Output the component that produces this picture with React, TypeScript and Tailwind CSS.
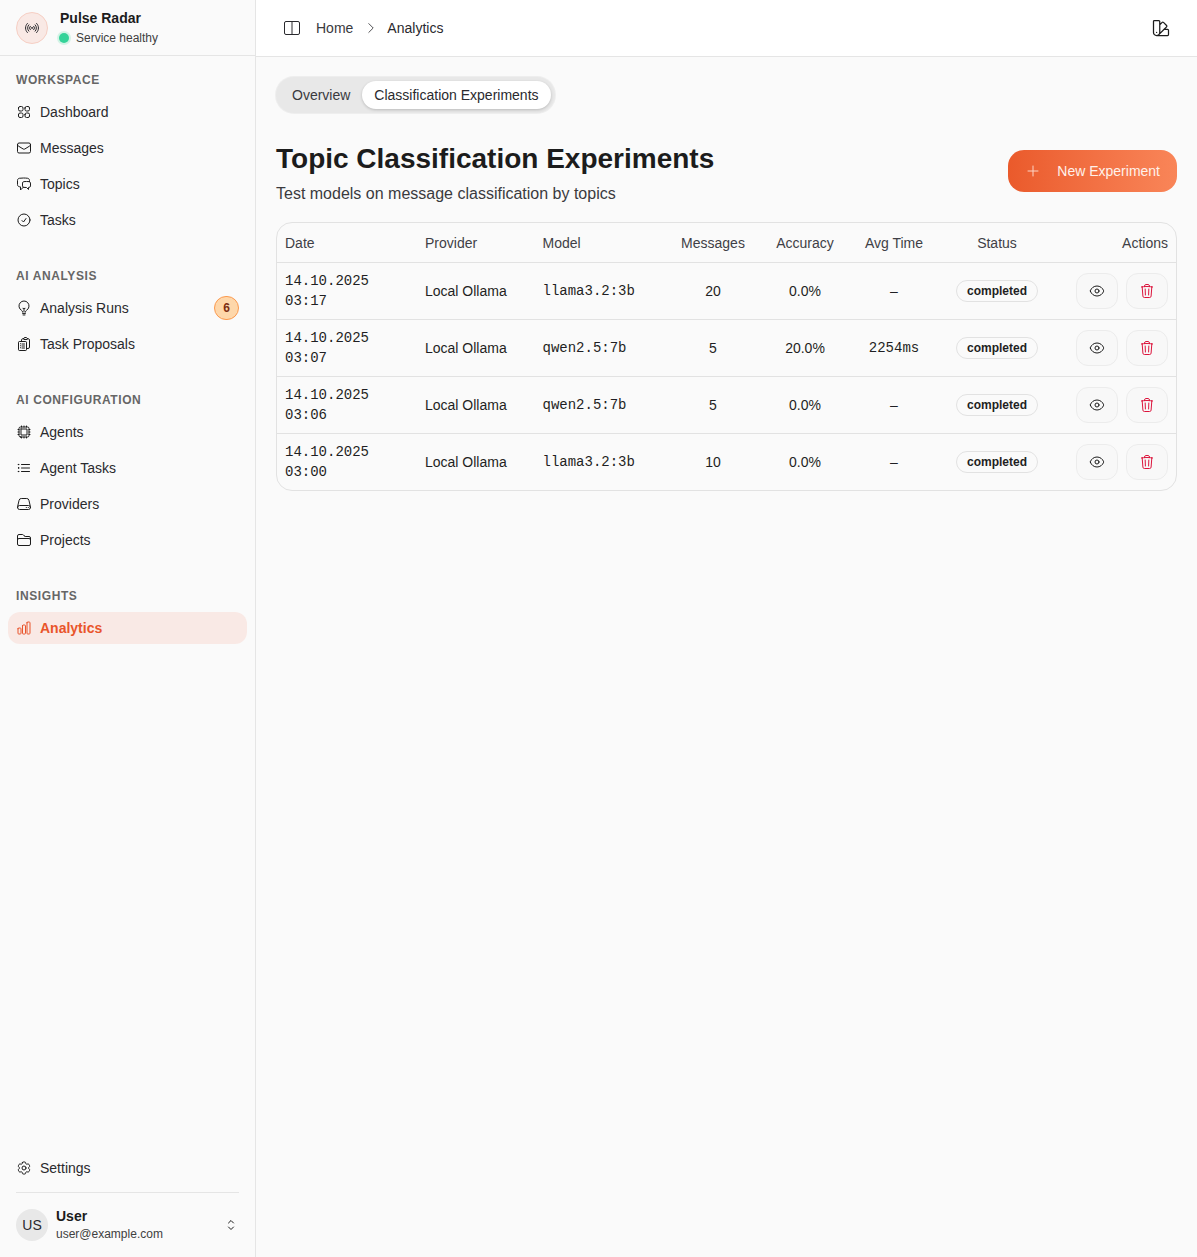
import React from 'react';
import {
  HiOutlineChartBar,
  HiOutlineChatBubbleLeftRight,
  HiOutlineCheckCircle,
  HiOutlineChevronRight,
  HiOutlineChevronUpDown,
  HiOutlineClipboardDocumentList,
  HiOutlineCog6Tooth,
  HiOutlineCpuChip,
  HiOutlineEnvelope,
  HiOutlineEye,
  HiOutlineFolder,
  HiOutlineLightBulb,
  HiOutlineListBullet,
  HiOutlinePlus,
  HiOutlineServer,
  HiOutlineSignal,
  HiOutlineSquares2X2,
  HiOutlineSwatch,
  HiOutlineTrash,
} from 'react-icons/hi2';

type IconType = React.ComponentType<{ className?: string }>;

interface NavItem {
  label: string;
  icon: IconType;
  badge?: string;
  active?: boolean;
}

const navGroups: { title: string; items: NavItem[] }[] = [
  {
    title: 'Workspace',
    items: [
      { label: 'Dashboard', icon: HiOutlineSquares2X2 },
      { label: 'Messages', icon: HiOutlineEnvelope },
      { label: 'Topics', icon: HiOutlineChatBubbleLeftRight },
      { label: 'Tasks', icon: HiOutlineCheckCircle },
    ],
  },
  {
    title: 'AI Analysis',
    items: [
      { label: 'Analysis Runs', icon: HiOutlineLightBulb, badge: '6' },
      { label: 'Task Proposals', icon: HiOutlineClipboardDocumentList },
    ],
  },
  {
    title: 'AI Configuration',
    items: [
      { label: 'Agents', icon: HiOutlineCpuChip },
      { label: 'Agent Tasks', icon: HiOutlineListBullet },
      { label: 'Providers', icon: HiOutlineServer },
      { label: 'Projects', icon: HiOutlineFolder },
    ],
  },
  {
    title: 'Insights',
    items: [{ label: 'Analytics', icon: HiOutlineChartBar, active: true }],
  },
];

const experiments = [
  { date: '14.10.2025', time: '03:17', provider: 'Local Ollama', model: 'llama3.2:3b', messages: 20, accuracy: '0.0%', avg: '–' },
  { date: '14.10.2025', time: '03:07', provider: 'Local Ollama', model: 'qwen2.5:7b', messages: 5, accuracy: '20.0%', avg: '2254ms' },
  { date: '14.10.2025', time: '03:06', provider: 'Local Ollama', model: 'qwen2.5:7b', messages: 5, accuracy: '0.0%', avg: '–' },
  { date: '14.10.2025', time: '03:00', provider: 'Local Ollama', model: 'llama3.2:3b', messages: 10, accuracy: '0.0%', avg: '–' },
];

const NavRow: React.FC<{ item: NavItem }> = ({ item }) => {
  const Icon = item.icon;
  return (
    <div className={`flex h-8 items-center gap-2 rounded-xl px-2 text-sm ${item.active ? 'bg-[#f9e9e5] font-semibold text-[#e9552b]' : 'text-[#2a2a2e]'}`}>
      <Icon className={`h-4 w-4 shrink-0 ${item.active ? '' : 'text-[#1c1c1c]'}`} />
      <span className="flex-1">{item.label}</span>
      {item.badge && (
        <span className="flex h-6 w-[25px] items-center justify-center rounded-full border border-[#fb9a4f] bg-[#fed7aa] text-xs font-bold text-[#7c2d12]">
          {item.badge}
        </span>
      )}
    </div>
  );
};

const Sidebar = () => (
  <aside className="flex min-h-screen w-[256px] shrink-0 flex-col border-r border-[#e5e5e5] bg-[#fafafa]">
    <div className="flex h-[56px] items-center gap-3 border-b border-[#e5e5e5] px-4">
      <div className="flex h-8 w-8 items-center justify-center rounded-full border border-[#f6cfc4] bg-[#f9e9e5] text-[#2a2a2e]">
        <HiOutlineSignal className="h-4 w-4" />
      </div>
      <div className="mb-[2px] min-w-0">
        <div className="text-sm leading-5 font-semibold text-[#1c1c1c]">Pulse Radar</div>
        <div className="mt-0.5 -ml-px flex items-center gap-[7px] text-xs leading-4 text-[#404040]">
          <span className="h-2.5 w-2.5 rounded-full bg-[#34d399] ring-2 ring-[#d3f3e6]" />
          Service healthy
        </div>
      </div>
    </div>
    <nav className="flex flex-1 flex-col gap-2">
      {navGroups.map(group => (
        <div key={group.title} className="p-2">
          <div className="flex h-8 items-center px-2 text-xs font-semibold tracking-wider text-[#666666] uppercase">
            {group.title}
          </div>
          <div className="flex flex-col gap-1">
            {group.items.map(item => (
              <NavRow key={item.label} item={item} />
            ))}
          </div>
        </div>
      ))}
    </nav>
    <div className="px-2 pt-2 pb-[13px]">
      <NavRow item={{ label: 'Settings', icon: HiOutlineCog6Tooth }} />
      <div className="mx-2 mt-2 border-t border-[#e5e5e5]" />
      <div className="flex items-center gap-2 px-2 pt-[13px]">
        <div className="flex h-8 w-8 items-center justify-center rounded-full bg-[#e8e8e8] text-sm text-[#2a2a2e]">US</div>
        <div className="mb-[2px] min-w-0 flex-1">
          <div className="text-sm leading-5 font-semibold text-[#1c1c1c]">User</div>
          <div className="text-xs leading-4 text-[#404040]">user@example.com</div>
        </div>
        <HiOutlineChevronUpDown className="h-4 w-4 text-[#1c1c1c]" />
      </div>
    </div>
  </aside>
);

const Topbar = () => (
  <header className="flex h-[57px] items-center justify-between border-b border-[#e5e5e5] bg-white px-[28px] text-sm">
    <div className="flex items-center">
      <svg width="16" height="14" viewBox="0 0 16 14" fill="none" stroke="#2a2a2e">
        <rect x="0.5" y="0.5" width="15" height="13" rx="1.5" />
        <line x1="8" y1="0.5" x2="8" y2="13.5" />
      </svg>
      <span className="ml-4 text-[#3a3a3e]">Home</span>
      <HiOutlineChevronRight className="mr-[9px] ml-[11px] h-3.5 w-3.5 text-[#3a3a3e]" />
      <span className="text-[#2a2a2e]">Analytics</span>
    </div>
    <HiOutlineSwatch className="mr-[-2px] h-5 w-5 text-[#1c1c1c]" />
  </header>
);

const thClass = 'h-[39px] px-2 pt-[2px] text-sm font-normal text-[#3f3f46]';
const tdClass = 'p-2 text-sm text-[#1f1f23]';

const ExperimentsTable = () => (
  <div className="mt-4 overflow-hidden rounded-2xl border border-[#e2e2e2]">
    <table className="w-full table-fixed border-collapse">
      <colgroup>
        <col className="w-[140px]" />
        <col className="w-[117.5px]" />
        <col className="w-[132.5px]" />
        <col className="w-[92px]" />
        <col className="w-[92px]" />
        <col className="w-[86px]" />
        <col className="w-[120px]" />
        <col />
      </colgroup>
      <thead>
        <tr>
          <th className={`${thClass} text-left`}>Date</th>
          <th className={`${thClass} text-left`}>Provider</th>
          <th className={`${thClass} text-left`}>Model</th>
          <th className={`${thClass} text-center`}>Messages</th>
          <th className={`${thClass} text-center`}>Accuracy</th>
          <th className={`${thClass} text-center`}>Avg Time</th>
          <th className={`${thClass} text-center`}>Status</th>
          <th className={`${thClass} text-right`}>Actions</th>
        </tr>
      </thead>
      <tbody>
        {experiments.map(row => (
          <tr key={row.time} className="border-t border-[#e2e2e2]">
            <td className={`${tdClass} font-['Liberation_Mono',monospace]`}>
              {row.date}
              <br />
              {row.time}
            </td>
            <td className={tdClass}>{row.provider}</td>
            <td className={`${tdClass} font-['Liberation_Mono',monospace]`}>{row.model}</td>
            <td className={`${tdClass} text-center`}>{row.messages}</td>
            <td className={`${tdClass} text-center`}>{row.accuracy}</td>
            <td className={`${tdClass} text-center ${row.avg !== '–' ? "font-['Liberation_Mono',monospace]" : ''}`}>{row.avg}</td>
            <td className={`${tdClass} text-center`}>
              <span className="inline-flex h-[22px] items-center rounded-full border border-[#e2e2e2] px-2.5 text-xs font-semibold text-[#1f1f23]">
                completed
              </span>
            </td>
            <td className={tdClass}>
              <div className="flex justify-end gap-2">
                <button className="flex h-9 w-[42px] items-center justify-center rounded-xl border border-[#ececec] bg-[#f8f8f8] text-[#1c1c1c]">
                  <HiOutlineEye className="h-4 w-4" />
                </button>
                <button className="flex h-9 w-[42px] items-center justify-center rounded-xl border border-[#ececec] bg-[#f8f8f8] text-[#dc143c]">
                  <HiOutlineTrash className="h-4 w-4" />
                </button>
              </div>
            </td>
          </tr>
        ))}
      </tbody>
    </table>
  </div>
);

export default function App() {
  return (
    <div className="flex min-h-screen bg-[#fafafa] font-['Liberation_Sans',Arial,sans-serif]">
      <Sidebar />
      <main className="min-w-0 flex-1">
        <Topbar />
        <div className="p-5">
          <div className="inline-flex h-9 items-center rounded-full bg-[#e8e8e8] p-1 text-sm shadow-[0_0_0_1px_#eeeeee]">
            <span className="px-3 text-[#3a3a3e]">Overview</span>
            <span className="flex h-7 items-center rounded-full bg-white px-3 text-[#2a2a2e] shadow-[0_1px_3px_rgba(0,0,0,0.2)]">
              Classification Experiments
            </span>
          </div>
          <div className="mt-[22px] flex items-start justify-between">
            <div>
              <h1 className="text-[28px] leading-[48px] font-bold text-[#1c1c1c]">Topic Classification Experiments</h1>
              <p className="mt-[-1px] text-base leading-6 text-[#3a3a3e]">Test models on message classification by topics</p>
            </div>
            <button className="mt-[15px] flex h-[42px] items-center gap-4 rounded-2xl bg-gradient-to-r from-[#ea5a2b] to-[#f98558] px-[17px] text-sm text-[#fff1ea]">
              <HiOutlinePlus className="h-4 w-4 text-[#fdd5c6]" />
              New Experiment
            </button>
          </div>
          <ExperimentsTable />
        </div>
      </main>
    </div>
  );
}
